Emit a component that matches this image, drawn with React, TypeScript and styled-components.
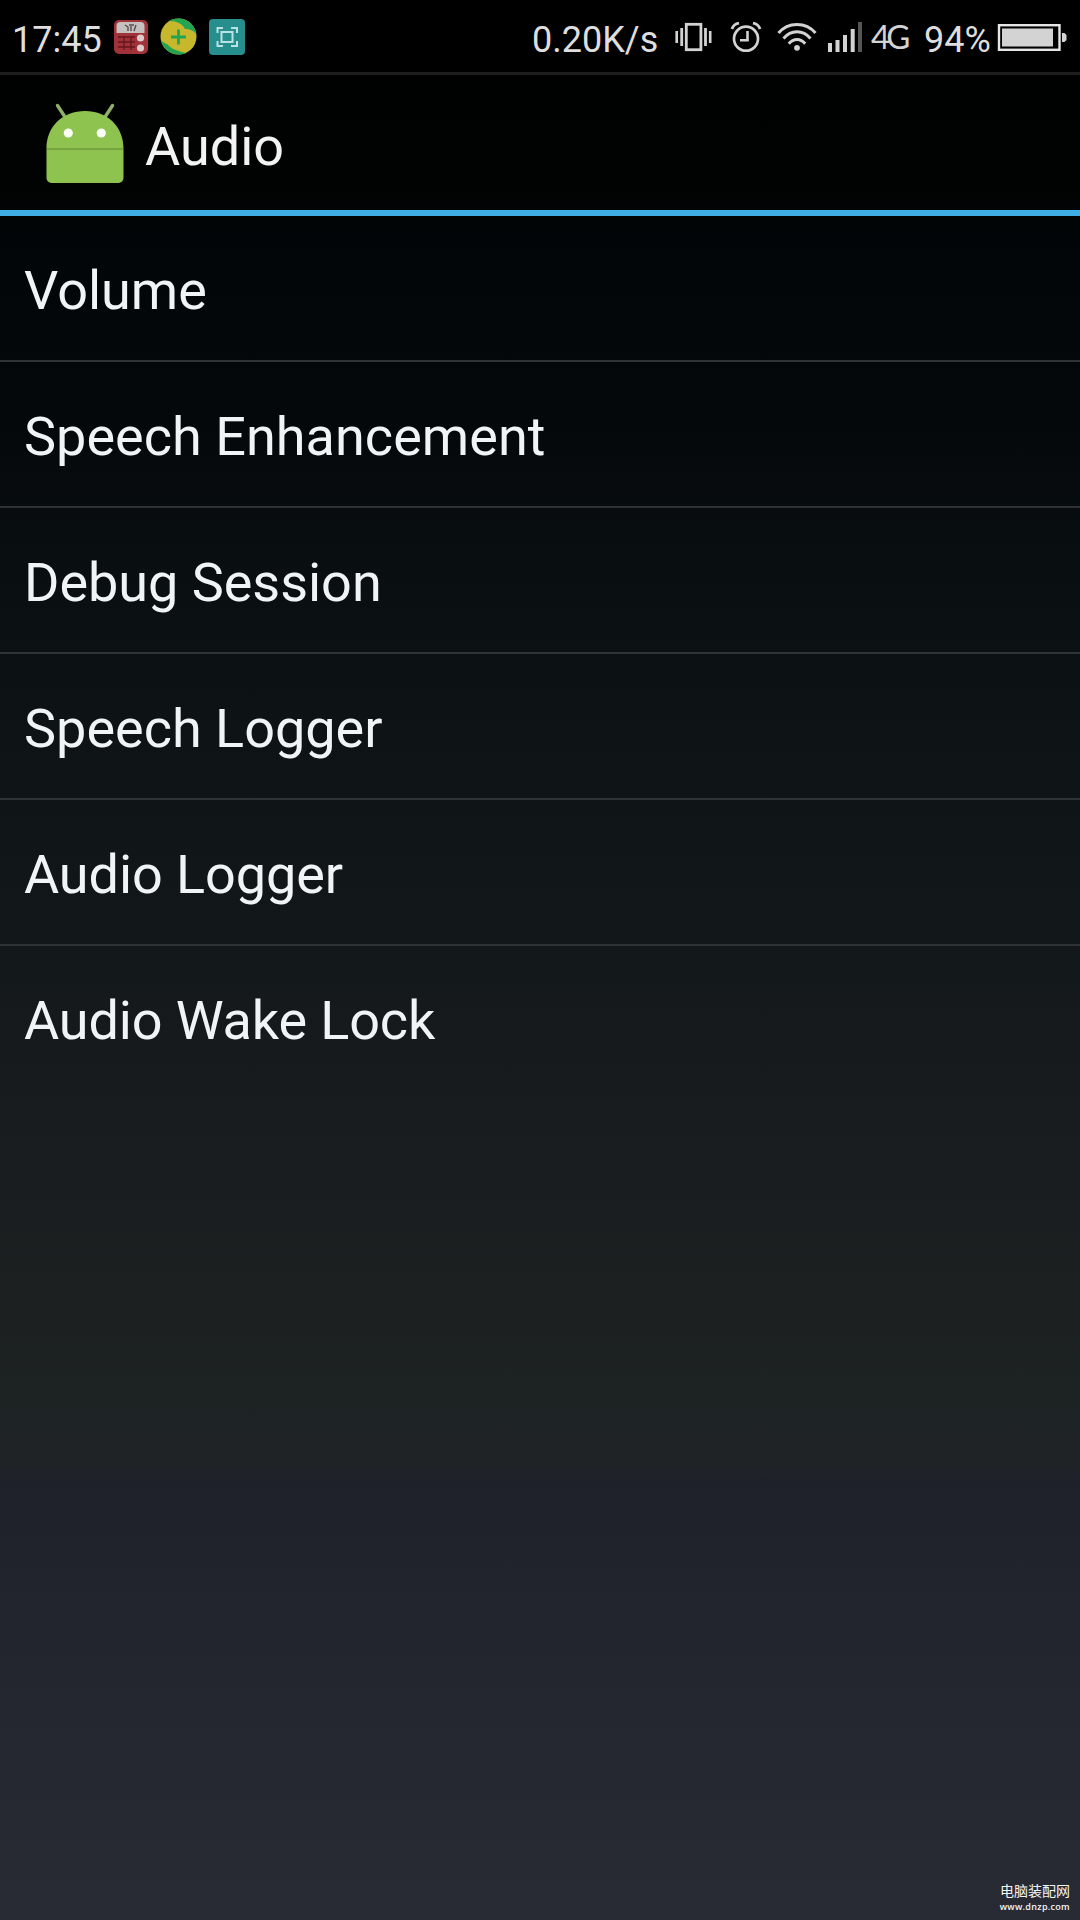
import React from 'react';
import styled, { createGlobalStyle } from 'styled-components';

const GlobalStyle = createGlobalStyle`
  * { box-sizing: border-box; }
  html, body { margin: 0; padding: 0; background: #000; }
  body { font-family: Roboto, 'Noto Sans', sans-serif; }
`;

const Screen = styled.main`
  position: relative;
  display: flex;
  flex-direction: column;
  width: 1080px;
  height: 1920px;
  overflow: hidden;
  background: linear-gradient(
    180deg,
    #000000 0px,
    #010302 180px,
    #020608 260px,
    #04080b 420px,
    #090e11 560px,
    #0e1316 740px,
    #121719 930px,
    #171b1d 1080px,
    #1b1f20 1260px,
    #1d2223 1400px,
    #1f2325 1462px,
    #1f212a 1480px,
    #23252e 1620px,
    #252830 1770px,
    #292b34 1920px
  );
`;

const StatusBar = styled.header`
  display: flex;
  justify-content: space-between;
  height: 75px;
  padding: 0 13px 0 12px;
  border-bottom: 3px solid #1d1d1d;
  background: #000;
`;

const Group = styled.div`
  display: flex;
  align-items: flex-start;
`;

const StatusText = styled.span<{ $w: number; $gap?: number; $size?: number; $top?: number; $font?: string; $color?: string; $track?: number }>`
  flex: none;
  width: ${(p) => p.$w}px;
  margin-left: ${(p) => p.$gap ?? 0}px;
  padding-top: ${(p) => p.$top ?? 19}px;
  font-family: ${(p) => p.$font ?? 'Roboto'}, sans-serif;
  font-size: ${(p) => p.$size ?? 36}px;
  line-height: 42px;
  letter-spacing: ${(p) => p.$track ?? 0}px;
  white-space: nowrap;
  color: ${(p) => p.$color ?? '#dedede'};
`;

const Glyph = styled.svg<{ $gap: number; $top: number }>`
  flex: none;
  display: block;
  margin-left: ${(p) => p.$gap}px;
  margin-top: ${(p) => p.$top}px;
`;

const ActionBar = styled.div`
  display: flex;
  align-items: flex-start;
  height: 141px;
  padding-left: 46px;
  border-bottom: 6px solid #3eaee4;
`;

const Title = styled.h1`
  margin: 37px 0 0 21px;
  font-size: 54px;
  font-weight: 400;
  line-height: 70px;
  color: #f3f3f3;
`;

const List = styled.ul`
  margin: 0;
  padding: 0;
  list-style: none;
`;

const Row = styled.li<{ $track: number }>`
  display: flex;
  align-items: center;
  height: 146px;
  padding: 5px 24px 0;
  border-bottom: 2px solid #2f3335;
  font-size: 54px;
  letter-spacing: ${(p) => p.$track}px;
  color: #f1f4f6;
  white-space: nowrap;
  &:last-child { border-bottom-color: transparent; }
`;

const Watermark = styled.div`
  position: absolute;
  right: 10px;
  bottom: 7px;
  display: flex;
  flex-direction: column;
  align-items: flex-end;
  color: #f4f4f6;
`;

const SiteName = styled.span`
  font: 400 14px/15px 'Noto Sans CJK SC', sans-serif;
  padding-bottom: 3px;
`;

const SiteUrl = styled.span`
  font: 600 9px/12px 'Open Sans', sans-serif;
  letter-spacing: 0.3px;
`;

const RadioIcon = () => (
  <Glyph $gap={1} $top={19} width="36" height="36" viewBox="0 0 36 36">
    <rect x="1" y="1" width="34" height="34" rx="5" fill="#a03239" />
    <path d="M3.500 14V7a4 4 0 0 1 4-4h20a4 4 0 0 1 4 4v7z" fill="#c5c1c1" />
    <path d="M12 6l3 2v4M16 6h5M18 7v5M23 6l-2 6" stroke="#5c4b4d" strokeWidth="1.400" fill="none" />
    <path d="M5 18h17M5 23h17M5 28h17M11 18v13M18 18v13" stroke="#68151d" strokeWidth="1.300" />
    <circle cx="27.500" cy="19" r="3.600" fill="#ddcaca" />
    <circle cx="27.500" cy="29" r="3.600" fill="#ddcaca" />
  </Glyph>
);

const PlusIcon = () => (
  <Glyph $gap={11} $top={18} width="37" height="38" viewBox="0 0 37 38">
    <circle cx="18.500" cy="18.500" r="18" fill="#c6b72c" />
    <path d="M9 3C17-1.500 28 .500 33 8c2 3 2.500 5 3 8-2-3-6-5-11-5C23 6 17 3 9 3z" fill="#21a552" />
    <path d="M1 22c3 4 6 3 8 6 4 4 10 5 17 7C17 39 4 35 1 22z" fill="#21a552" />
    <path d="M18.500 11.500v15M11 19h15" stroke="#21a552" strokeWidth="2.800" />
  </Glyph>
);

const CaptureIcon = () => (
  <Glyph $gap={12} $top={19} width="36" height="36" viewBox="0 0 36 36">
    <rect width="36" height="36" rx="4" fill="#278e8e" />
    <g fill="none" stroke="#b9e3e2" strokeWidth="2">
      <rect x="12.500" y="13" width="11" height="10" />
      <path d="M8.500 14V9H14M22 9h6v5M28 22v5h-6M14 27H8.500v-5" />
    </g>
  </Glyph>
);

const VibrateIcon = () => (
  <Glyph $gap={15} $top={22} width="37" height="30" viewBox="0 0 37 30" fill="none" stroke="#d3d3d3">
    <rect x="11.300" y="2.300" width="14.600" height="25.400" strokeWidth="2.800" />
    <path d="M6.700 6v18M30.500 6v18" strokeWidth="2.800" />
    <path d="M1.700 9v12M35.200 9v12" strokeWidth="2.600" />
  </Glyph>
);

const AlarmIcon = () => (
  <Glyph $gap={18} $top={21} width="32" height="32" viewBox="0 0 32 32" fill="none" stroke="#d3d3d3">
    <circle cx="16" cy="17.700" r="12" strokeWidth="2.700" />
    <path d="M1.900 8C3 5 5.600 2.800 9 2.200M30.100 8C29 5 26.400 2.800 23 2.200" strokeWidth="2.800" />
    <path d="M17.500 10v9.200H10" strokeWidth="2.600" />
  </Glyph>
);

const WifiIcon = () => (
  <Glyph $gap={15} $top={21} width="40" height="32" viewBox="0 0 40 32" fill="none" stroke="#d3d3d3">
    <path d="M1.500 12C11 .5 29 .5 38.500 12" strokeWidth="3" />
    <path d="M6.500 17.500c7.500-9 19.500-9 27 0" strokeWidth="3" />
    <path d="M11.800 22.800c4.700-5.600 11.700-5.600 16.400 0" strokeWidth="3" />
    <circle cx="20" cy="26.800" r="2.900" fill="#d3d3d3" stroke="none" />
  </Glyph>
);

const SignalIcon = () => (
  <Glyph $gap={11} $top={22} width="34" height="30" viewBox="0 0 34 30" fill="#d3d3d3">
    <rect x="0" y="21" width="4" height="9" />
    <rect x="7.500" y="18" width="4" height="12" />
    <rect x="15" y="13" width="4" height="17" />
    <rect x="22.700" y="7" width="4" height="23" />
    <rect x="30" y="0" width="4" height="30" fill="#565656" />
  </Glyph>
);

const BatteryIcon = () => (
  <Glyph $gap={7} $top={24} width="70" height="27" viewBox="0 0 70 27">
    <rect x="2" y="1.200" width="60.500" height="24.600" fill="none" stroke="#e6e6e6" strokeWidth="2.400" />
    <rect x="5" y="4.500" width="51" height="18" fill="#d3d3d3" />
    <path d="M65 9h2.500L69.500 11v5l-2 2H65z" fill="#d3d3d3" />
  </Glyph>
);

const AndroidIcon = () => (
  <Glyph $gap={0} $top={27} width="78" height="82" viewBox="0 0 78 82">
    <path d="M11.500 3.500l8.500 13M66.500 3.500L58 16.500" stroke="#8fae6a" strokeWidth="3.400" strokeLinecap="round" />
    <path d="M.5 46.500C.5 24 17 9 39 9s38.500 15 38.500 37.500V76a5 5 0 0 1-5 5h-67a5 5 0 0 1-5-5z" fill="#8ec350" />
    <path d="M1 47h76" stroke="#6b9b38" strokeWidth="1.300" />
    <circle cx="22.300" cy="31" r="4.600" fill="#fafff5" />
    <circle cx="55.300" cy="31" r="4.600" fill="#fafff5" />
  </Glyph>
);

const entries = [
  { label: 'Volume', track: 0 },
  { label: 'Speech Enhancement', track: 0.03 },
  { label: 'Debug Session', track: -0.03 },
  { label: 'Speech Logger', track: 0 },
  { label: 'Audio Logger', track: -0.08 },
  { label: 'Audio Wake Lock', track: -0.14 },
];

export default function App() {
  return (
    <>
      <GlobalStyle />
      <Screen>
        <StatusBar>
          <Group>
            <StatusText $w={100}>17:45</StatusText>
            <RadioIcon />
            <PlusIcon />
            <CaptureIcon />
          </Group>
          <Group>
            <StatusText $w={128}>0.20K/s</StatusText>
            <VibrateIcon />
            <AlarmIcon />
            <WifiIcon />
            <SignalIcon />
            <StatusText $w={40} $gap={9} $size={33} $top={15} $font="Lato" $color="#d3d3d3" $track={-4}>4G</StatusText>
            <StatusText $w={66} $gap={13}>94%</StatusText>
            <BatteryIcon />
          </Group>
        </StatusBar>
        <ActionBar>
          <AndroidIcon />
          <Title>Audio</Title>
        </ActionBar>
        <List>
          {entries.map(({ label, track }) => (
            <Row key={label} $track={track}>{label}</Row>
          ))}
        </List>
        <Watermark>
          <SiteName>电脑装配网</SiteName>
          <SiteUrl>www.dnzp.com</SiteUrl>
        </Watermark>
      </Screen>
    </>
  );
}
